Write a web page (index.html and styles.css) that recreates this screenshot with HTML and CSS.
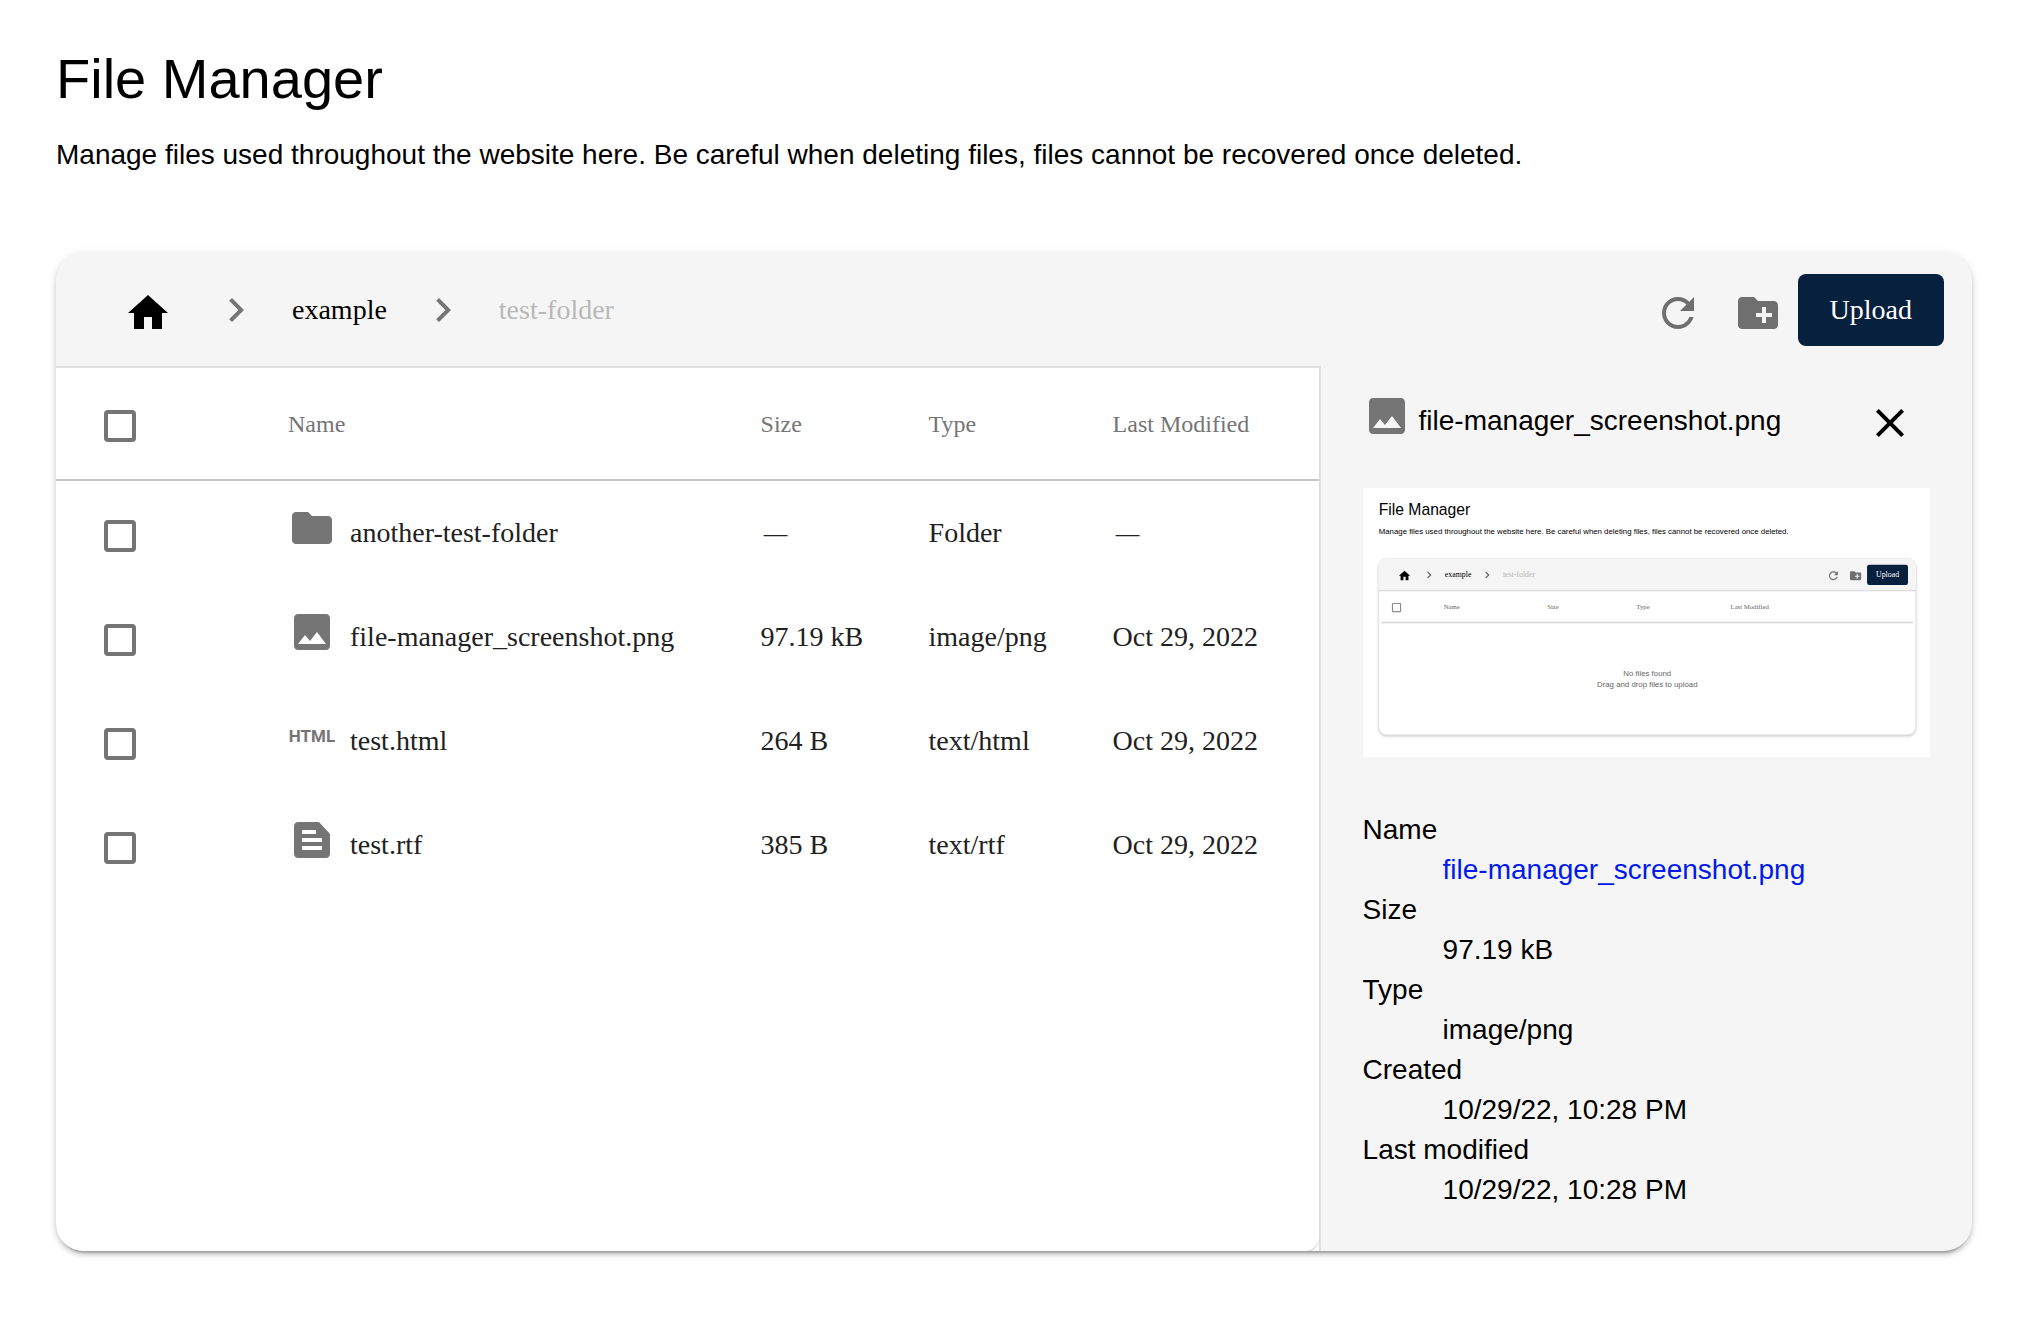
FILE: index.html
```html
<!DOCTYPE html>
<html lang="en">
<head>
<meta charset="utf-8">
<title>File Manager</title>
<link rel="stylesheet" href="styles.css">
</head>
<body>
<svg class="sprite" aria-hidden="true">
  <symbol id="home" viewBox="0 0 24 24"><path d="M10 20v-6h4v6h5v-8h3L12 3 2 12h3v8z"/></symbol>
  <symbol id="chevron" viewBox="0 0 24 24"><path d="M10 6 8.59 7.41 13.17 12l-4.58 4.59L10 18l6-6z"/></symbol>
  <symbol id="refresh" viewBox="0 0 24 24"><path d="M17.65 6.35C16.2 4.9 14.21 4 12 4c-4.42 0-7.99 3.58-7.99 8s3.57 8 7.99 8c3.73 0 6.84-2.55 7.73-6h-2.08c-.82 2.33-3.04 4-5.65 4-3.31 0-6-2.69-6-6s2.69-6 6-6c1.66 0 3.14.69 4.22 1.78L13 11h7V4l-2.35 2.35z"/></symbol>
  <symbol id="new-folder" viewBox="0 0 24 24"><path d="M20 6h-8l-2-2H4c-1.11 0-1.99.89-1.99 2L2 18c0 1.11.89 2 2 2h16c1.11 0 2-.89 2-2V8c0-1.11-.89-2-2-2zm-1 8h-3v3h-2v-3h-3v-2h3V9h2v3h3v2z"/></symbol>
  <symbol id="folder" viewBox="0 0 24 24"><path d="M10 4H4c-1.1 0-1.99.9-1.99 2L2 18c0 1.1.9 2 2 2h16c1.1 0 2-.9 2-2V8c0-1.1-.9-2-2-2h-8l-2-2z"/></symbol>
  <symbol id="image" viewBox="0 0 24 24"><path fill-rule="evenodd" d="M5 3h14c1.100 0 2 .9 2 2v14c0 1.100-.9 2-2 2H5c-1.100 0-2-.9-2-2V5c0-1.100.9-2 2-2zM5 18h14l-4.500-6-3.500 4.510-2.500-3.010z"/></symbol>
  <symbol id="article" viewBox="0 0 24 24"><path fill-rule="evenodd" d="M5 3h10.500L21 9v10c0 1.100-.9 2-2 2H5c-1.100 0-2-.9-2-2V5c0-1.100.9-2 2-2zM7 7h7v2H7zM7 11h10v2H7zM7 15h10v2H7z"/></symbol>
  <symbol id="close" viewBox="0 0 24 24"><path d="M19 6.410 17.590 5 12 10.590 6.410 5 5 6.410 10.590 12 5 17.590 6.410 19 12 13.410 17.590 19 19 17.590 13.410 12z"/></symbol>
</svg>

<main class="page">
  <h1 class="page-title">File Manager</h1>
  <p class="page-intro">Manage files used throughout the website here. Be careful when deleting files, files cannot be recovered once deleted.</p>

  <section class="card">
    <header class="toolbar">
      <nav class="crumbs" aria-label="Folder path">
        <button class="crumb crumb-home" type="button" aria-label="Home"><svg class="icon icon-low"><use href="#home"/></svg></button>
        <svg class="icon icon-grey" aria-hidden="true"><use href="#chevron"/></svg>
        <button class="crumb" type="button">example</button>
        <svg class="icon icon-grey" aria-hidden="true"><use href="#chevron"/></svg>
        <button class="crumb" type="button" disabled>test-folder</button>
      </nav>
      <div class="actions">
        <button class="icon-button" type="button" aria-label="Refresh"><svg class="icon icon-low"><use href="#refresh"/></svg></button>
        <button class="icon-button" type="button" aria-label="New folder"><svg class="icon icon-low"><use href="#new-folder"/></svg></button>
        <button class="upload" type="button">Upload</button>
      </div>
    </header>

    <div class="content">
      <div class="listing">
        <div class="listing-sheet">
          <table class="files">
            <colgroup>
              <col class="col-check"><col><col class="col-size"><col class="col-type"><col class="col-date">
            </colgroup>
            <thead>
              <tr>
                <th class="check-cell"><input class="check" type="checkbox" aria-label="Select all"></th>
                <th>Name</th><th>Size</th><th>Type</th><th>Last Modified</th>
              </tr>
            </thead>
            <tbody>
              <tr>
                <td class="check-cell"><input class="check" type="checkbox" aria-label="Select another-test-folder"></td>
                <td><span class="file"><svg class="icon icon-file" aria-hidden="true"><use href="#folder"/></svg>another-test-folder</span></td>
                <td><span class="dash">—</span></td><td>Folder</td><td><span class="dash">—</span></td>
              </tr>
              <tr>
                <td class="check-cell"><input class="check" type="checkbox" aria-label="Select file-manager_screenshot.png"></td>
                <td><span class="file"><svg class="icon icon-file" aria-hidden="true"><use href="#image"/></svg>file-manager_screenshot.png</span></td>
                <td>97.19 kB</td><td>image/png</td><td>Oct 29, 2022</td>
              </tr>
              <tr>
                <td class="check-cell"><input class="check" type="checkbox" aria-label="Select test.html"></td>
                <td><span class="file"><svg class="icon icon-file" viewBox="0 0 48 48" aria-hidden="true"><text class="icon-text" x="24" y="30">HTML</text></svg>test.html</span></td>
                <td>264 B</td><td>text/html</td><td>Oct 29, 2022</td>
              </tr>
              <tr>
                <td class="check-cell"><input class="check" type="checkbox" aria-label="Select test.rtf"></td>
                <td><span class="file"><svg class="icon icon-file" aria-hidden="true"><use href="#article"/></svg>test.rtf</span></td>
                <td>385 B</td><td>text/rtf</td><td>Oct 29, 2022</td>
              </tr>
            </tbody>
          </table>
        </div>
      </div>

      <aside class="details">
        <div class="details-head">
          <h2 class="details-title"><svg class="icon icon-file" aria-hidden="true"><use href="#image"/></svg>file-manager_screenshot.png</h2>
          <button class="close" type="button" aria-label="Close"><svg class="icon"><use href="#close"/></svg></button>
        </div>

        <svg class="preview" viewBox="0 0 2024 960" role="img" aria-label="Preview of file-manager_screenshot.png">
          <rect width="2024" height="960" fill="#fff"/>
          <text class="shot-title" x="56" y="98">File Manager</text>
          <text class="shot-sans" x="56" y="164">Manage files used throughout the website here. Be careful when deleting files, files cannot be recovered once deleted.</text>
          <rect class="shot-card" x="56" y="252" width="1916" height="628" rx="28"/>
          <path fill="#f5f5f5" d="M56 366V280a28 28 0 0 1 28-28H1944a28 28 0 0 1 28 28V366z"/>
          <path stroke="#dcdcdc" stroke-width="4" d="M56 366H1972"/>
          <path stroke="#d4d4d4" stroke-width="5" d="M65 480H1963"/>
          <use href="#home" x="124" y="289" width="48" height="48"/>
          <use href="#chevron" x="212" y="286" width="48" height="48" fill="#555"/>
          <text class="shot-serif" x="292" y="319">example</text>
          <use href="#chevron" x="419" y="286" width="48" height="48" fill="#555"/>
          <text class="shot-serif shot-faint" x="499" y="319">test-folder</text>
          <use href="#refresh" x="1654" y="289" width="48" height="48" fill="#6f6f6f"/>
          <use href="#new-folder" x="1733" y="289" width="48" height="48" fill="#6f6f6f"/>
          <rect x="1798" y="274" width="146" height="72" rx="8" fill="#07203d"/>
          <text class="shot-serif shot-upload" x="1830" y="319">Upload</text>
          <rect x="105" y="412" width="29" height="29" rx="2" fill="none" stroke="#8a8a8a" stroke-width="4"/>
          <text class="shot-head" x="288" y="432">Name</text>
          <text class="shot-head" x="657" y="432">Size</text>
          <text class="shot-head" x="975" y="432">Type</text>
          <text class="shot-head" x="1311" y="432">Last Modified</text>
          <text class="shot-sans shot-empty" x="1014" y="670">No files found</text>
          <text class="shot-sans shot-empty" x="1014" y="711">Drag and drop files to upload</text>
        </svg>

        <dl class="facts">
          <dt>Name</dt><dd><a class="file-link" href="#file">file-manager_screenshot.png</a></dd>
          <dt>Size</dt><dd>97.19 kB</dd>
          <dt>Type</dt><dd>image/png</dd>
          <dt>Created</dt><dd>10/29/22, 10:28 PM</dd>
          <dt>Last modified</dt><dd>10/29/22, 10:28 PM</dd>
        </dl>
      </aside>
    </div>
  </section>
</main>
</body>
</html>
```

FILE: styles.css
```css
:root {
  --sans: "Liberation Sans", Arial, sans-serif;
  --serif: "Liberation Serif", "Times New Roman", serif;
  --grey: #757575;
  --panel: #f5f5f5;
  --line: #e0e0e0;
  --navy: #07203d;
}

* { box-sizing: border-box; }

body {
  margin: 0;
  background: #fff;
  color: #000;
  font: 28px/40px var(--sans);
}

button {
  border: 0;
  background: none;
  color: inherit;
  font: 28px/40px var(--serif);
  cursor: pointer;
}

.sprite { position: absolute; width: 0; height: 0; }

.page { padding: 47px 52px 72px 56px; }

.page-title {
  margin: 0;
  font-size: 56px;
  line-height: 64px;
  font-weight: 400;
}

.page-intro { margin: 24px 0 77px; }

.icon {
  display: block;
  flex: none;
  width: 48px;
  height: 48px;
  fill: currentColor;
}

.icon-grey { color: var(--grey); }
.icon-low { margin-top: 6px; }

.icon-file {
  margin-bottom: 10px;
  color: var(--grey);
}

.icon-text {
  font: 700 17px Roboto, sans-serif;
  text-anchor: middle;
}

/* Card */
.card {
  overflow: hidden;
  border-radius: 28px;
  background: var(--panel);
  box-shadow:
    0 6px 2px -4px rgba(0, 0, 0, .2),
    0 4px 4px rgba(0, 0, 0, .14),
    0 2px 10px rgba(0, 0, 0, .12);
}

.toolbar {
  display: flex;
  align-items: center;
  justify-content: space-between;
  padding: 22px 28px 20px;
}

.crumbs,
.actions {
  display: flex;
  align-items: center;
}

.crumb { padding: 0 32px; }
.crumb-home { padding: 0 40px; }
.crumb:disabled { color: #b8b8b8; }

.icon-button {
  padding: 0 16px;
  color: #6f6f6f;
}

.upload {
  padding: 16px 32px;
  border-radius: 8px;
  background: var(--navy);
  color: #fff;
}

.content {
  display: grid;
  grid-template-columns: minmax(0, 1fr) 34%;
}

/* File list */
.listing {
  display: flex;
  border-top: 2px solid var(--line);
  border-right: 2px solid var(--line);
  background: #fcfcfc;
}

.listing-sheet {
  flex: 1;
  border-bottom-right-radius: 14px;
  background: #fff;
  box-shadow: 0 1px 1px rgba(0, 0, 0, .2);
}

.files {
  width: 100%;
  table-layout: fixed;
  border-collapse: separate;
  border-spacing: 0;
  font-family: var(--serif);
  color: #212121;
}

.col-check { width: 232px; }
.col-size { width: 168px; }
.col-type { width: 184px; }
.col-date { width: 206px; }

.files th {
  height: 113px;
  padding: 0;
  border-bottom: 2px solid #c4c4c4;
  color: var(--grey);
  font-size: 24px;
  font-weight: 400;
  text-align: left;
}

.files td {
  height: 104px;
  padding: 0;
}

.files td.check-cell { padding: 6px 0 0 48px; }
.files th.check-cell { padding: 4px 0 0 48px; }

.check {
  display: block;
  appearance: none;
  width: 32px;
  height: 32px;
  margin: 0;
  border: 4px solid var(--grey);
  border-radius: 4px;
}

.check:checked { background: var(--grey); }

.file {
  display: flex;
  align-items: center;
  gap: 14px;
}

.dash {
  padding-left: 2px;
  font: 300 26px/40px "Noto Sans", sans-serif;
}

/* Details panel */
.details { padding: 17px 42px 41px; }

.details-head {
  display: flex;
  align-items: center;
  justify-content: space-between;
}

.details-title {
  display: flex;
  align-items: center;
  gap: 8px;
  margin: 0;
  padding-bottom: 4px;
  font-size: 28px;
  font-weight: 400;
}

.close { padding: 16px; }

.preview {
  display: block;
  width: 100%;
  margin-top: 25px;
}

.shot-title { font: 56px var(--sans); }
.shot-sans { font: 28px var(--sans); }
.shot-serif { font: 28px var(--serif); }
.shot-head { font: 24px var(--serif); fill: #666; }
.shot-faint { fill: #b4b4b4; }
.shot-upload { fill: #fff; }
.shot-empty { fill: #666; text-anchor: middle; }

.shot-card {
  fill: #fff;
  stroke: #e4e4e4;
  stroke-width: 3px;
  filter: drop-shadow(0 5px 3px rgba(0, 0, 0, .2));
}

.facts { margin: 53px 0 0; }
.facts dd { margin: 0 0 0 80px; }

.file-link {
  color: #001aee;
  text-decoration: none;
}
```
